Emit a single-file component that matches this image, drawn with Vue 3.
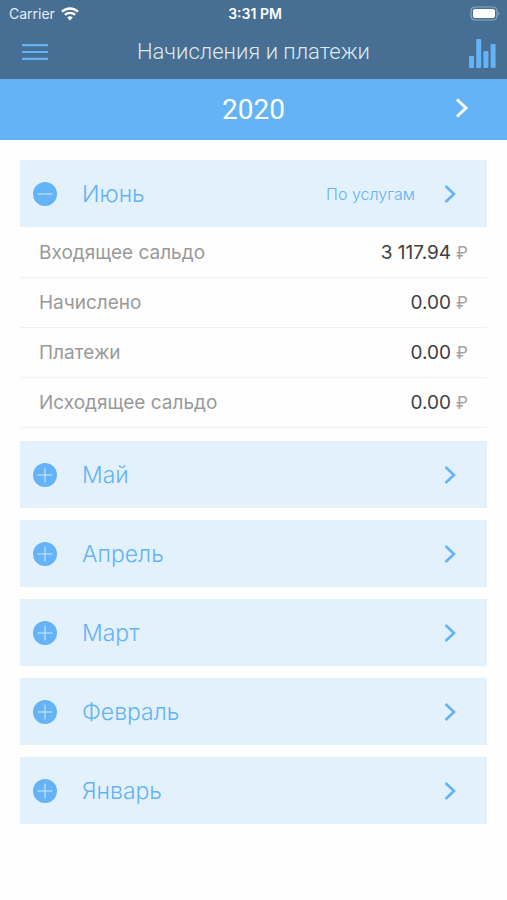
<script setup>
import { ref } from 'vue'

const year = ref(2020)
const opened = ref('Июнь')

const months = [
  {
    name: 'Июнь',
    rows: [
      { label: 'Входящее сальдо', value: '3 117.94' },
      { label: 'Начислено', value: '0.00' },
      { label: 'Платежи', value: '0.00' },
      { label: 'Исходящее сальдо', value: '0.00' }
    ]
  },
  { name: 'Май', rows: [] },
  { name: 'Апрель', rows: [] },
  { name: 'Март', rows: [] },
  { name: 'Февраль', rows: [] },
  { name: 'Январь', rows: [] }
]

function toggle(name) {
  opened.value = opened.value === name ? '' : name
}
</script>

<template>
  <div class="screen">
    <header class="top">
      <div class="status">
        <div class="carrier">
          <span>Carrier</span>
          <svg class="wifi" width="18" height="14" viewBox="0 0 18 14" aria-hidden="true">
            <path d="M1 4.7a11.6 11.6 0 0 1 16 0" />
            <path d="M3.9 7.9a7.4 7.4 0 0 1 10.2 0" />
            <path class="dot" d="M9 13.4 6.2 10.5a4 4 0 0 1 5.6 0z" />
          </svg>
        </div>
        <time class="clock">3:31 PM</time>
        <div class="power">
          <svg width="31" height="15" viewBox="0 0 31 15" aria-hidden="true">
            <rect class="shell" x="1" y="1" width="26" height="13" rx="4" />
            <rect class="charge" x="3" y="3" width="22" height="9" rx="2" />
            <path class="tip" d="M28.5 5.2q1.8 2.3 0 4.6z" />
          </svg>
        </div>
      </div>
      <div class="bar">
        <button class="icon-button" type="button" aria-label="Меню">
          <svg width="26" height="16" viewBox="0 0 26 16" aria-hidden="true">
            <path class="menu" d="M0 1.2h26M0 8h26M0 14.8h26" />
          </svg>
        </button>
        <h1 class="title">Начисления и платежи</h1>
        <button class="icon-button chart" type="button" aria-label="Статистика">
          <svg width="27" height="29" viewBox="0 0 27 29" aria-hidden="true">
            <rect x="0" y="17" width="5" height="12" rx="1" />
            <rect x="7.2" y="0" width="5" height="29" rx="1" />
            <rect x="14.4" y="12" width="5" height="17" rx="1" />
            <rect x="21.6" y="5" width="5" height="24" rx="1" />
          </svg>
        </button>
      </div>
    </header>

    <nav class="year">
      <span class="year-value">{{ year }}</span>
      <button class="icon-button next" type="button" aria-label="Следующий год" @click="year++">
        <svg width="14" height="20" viewBox="0 0 14 20" aria-hidden="true">
          <path class="arrow" d="M2 1.5 11 10 2 18.5" />
        </svg>
      </button>
    </nav>

    <main class="months">
      <section v-for="month in months" :key="month.name">
        <div class="month">
          <button
            class="toggle"
            type="button"
            :aria-expanded="opened === month.name"
            @click="toggle(month.name)"
          >
            <svg class="mark" width="24" height="24" viewBox="0 0 24 24" aria-hidden="true">
              <circle cx="12" cy="12" r="12" />
              <path d="M4.5 12h15" />
              <path v-if="opened !== month.name" d="M12 4.5v15" />
            </svg>
            <span>{{ month.name }}</span>
          </button>
          <a class="services" href="#services" :aria-label="'По услугам, ' + month.name">
            <span v-if="opened === month.name">По услугам</span>
            <svg width="12" height="18" viewBox="0 0 12 18" aria-hidden="true">
              <path class="arrow" d="M1.5 1 10 9 1.5 17" />
            </svg>
          </a>
        </div>
        <dl v-if="opened === month.name && month.rows.length" class="details">
          <div v-for="row in month.rows" :key="row.label" class="row">
            <dt>{{ row.label }}</dt>
            <dd>{{ row.value }}<span class="currency">₽</span></dd>
          </div>
        </dl>
      </section>
    </main>
  </div>
</template>

<style>
body {
  margin: 0;
  background: #fefefe;
}
</style>

<style scoped>
.screen {
  min-height: 100vh;
  font-family: Inter, "Liberation Sans", sans-serif;
  color: #404040;
}

button {
  margin: 0;
  padding: 0;
  border: 0;
  background: none;
  color: inherit;
  font: inherit;
  cursor: pointer;
}

svg {
  display: block;
  flex: none;
}

.top {
  background: #466f93;
  color: #fff;
}

.status {
  display: grid;
  grid-template-columns: 1fr auto 1fr;
  align-items: center;
  height: 27px;
  padding: 0 6px 0 9px;
  font-size: 14px;
}

.carrier {
  display: flex;
  align-items: center;
  gap: 6px;
  color: #e6edf3;
}

.wifi path {
  fill: none;
  stroke: #fff;
  stroke-width: 2.4;
}

.wifi .dot {
  fill: #fff;
  stroke: none;
}

.clock {
  font-weight: 600;
}

.power {
  justify-self: end;
}

.shell {
  fill: none;
  stroke: #8fabc3;
  stroke-width: 1.2;
}

.charge {
  fill: #fff;
}

.tip {
  fill: #8fabc3;
}

.bar {
  display: flex;
  align-items: center;
  justify-content: space-between;
  height: 52px;
  padding: 0 11px 2px 22px;
  box-sizing: border-box;
}

.icon-button {
  display: flex;
  color: #64b3f6;
}

.chart {
  padding-top: 2px;
  fill: #64b3f6;
}

.menu {
  stroke: #64b3f6;
  stroke-width: 2.2;
}

.title {
  flex: 1;
  margin: 0;
  padding-right: 10px;
  text-align: center;
  font-family: Roboto, sans-serif;
  font-size: 22px;
  font-weight: 300;
  line-height: 28px;
  color: #dfe9f2;
}

.year {
  display: grid;
  grid-template-columns: 1fr auto 1fr;
  align-items: center;
  height: 61px;
  padding: 0 38px;
  background: #64b3f6;
  color: #fff;
}

.year-value {
  grid-column: 2;
  font-family: Roboto, sans-serif;
  font-size: 28px;
  line-height: 32px;
}

.next {
  justify-self: end;
  padding-bottom: 4px;
  color: #fff;
}

.arrow {
  fill: none;
  stroke: currentColor;
  stroke-width: 2.6;
}

.next .arrow {
  stroke-width: 3;
}

.months {
  display: flex;
  flex-direction: column;
  gap: 12px;
  padding: 20px 20px 40px;
}

.month {
  display: flex;
  height: 67px;
  background: #e3f1fd;
  color: #64b3f6;
}

.toggle {
  flex: 1;
  display: flex;
  align-items: center;
  gap: 25px;
  padding-left: 13px;
  font-size: 23px;
  font-weight: 300;
  text-align: left;
}

.mark circle {
  fill: #64b3f6;
}

.mark path {
  stroke: #d5eafc;
  stroke-width: 1;
}

.services {
  display: flex;
  align-items: center;
  gap: 29px;
  padding-right: 31px;
  color: inherit;
  font-size: 16px;
  font-weight: 300;
  text-decoration: none;
}

.details {
  margin: 0;
  padding: 1px 0;
}

.row {
  display: flex;
  align-items: center;
  justify-content: space-between;
  height: 49px;
  padding: 0 19px;
  border-bottom: 1px solid #f1f1f1;
  font-size: 19px;
}

dt {
  color: #999;
}

dd {
  margin: 0;
}

.currency {
  margin-left: 5px;
  font-size: 17px;
  color: #a3a3a3;
}
</style>
